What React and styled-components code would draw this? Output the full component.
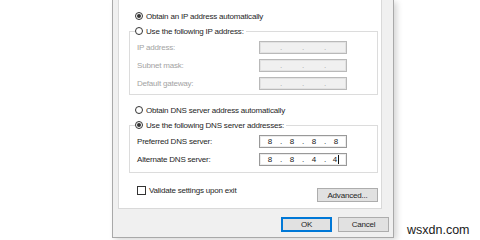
import React from "react";
import styled, { createGlobalStyle } from "styled-components";

const GlobalStyle = createGlobalStyle`
  html, body { margin: 0; padding: 0; background: #ffffff; }
  body {
    width: 480px; height: 240px; overflow: hidden;
    font-family: "Liberation Sans", Arial, sans-serif;
  }
  * { box-sizing: border-box; }
`;

const Page = styled.div`
  display: flex;
  align-items: flex-end;
  width: 480px;
  height: 240px;
  padding-left: 112px;
`;

const Dialog = styled.div`
  align-self: flex-start;
  width: 282px;
  height: 238px;
  display: flex;
  flex-direction: column;
  background: #f0f0f0;
  border: 1px solid #a9a9a9;
  border-top: none;
  box-shadow: 3px 2px 6px rgba(0, 0, 0, 0.16);
  font-size: 8px;
  letter-spacing: -0.2px;
  color: #1e1e1e;
`;

const Panel = styled.div`
  margin: 0 11px 0 5px;
  height: 209px;
  background: #ffffff;
  border: 1px solid #d9d9d9;
  border-top: none;
  padding-top: 10px;
  display: flex;
  flex-direction: column;
`;

const OptionRow = styled.label`
  display: flex;
  align-items: center;
  gap: 3px;
  height: 12px;
  padding-left: ${(p) => p.$indent || 0}px;
  margin-top: ${(p) => p.$top || 0}px;
  white-space: nowrap;
`;

const RadioDot = styled.span`
  width: 8px;
  height: 8px;
  flex: none;
  border: 1px solid #333333;
  border-radius: 50%;
  background: #ffffff;
  display: flex;
  align-items: center;
  justify-content: center;
  &::after {
    content: "";
    width: 4px;
    height: 4px;
    border-radius: 50%;
    background: ${(p) => (p.$on ? "#333333" : "transparent")};
  }
`;

const Group = styled.fieldset`
  margin: ${(p) => p.$top}px 3px 0 10px;
  padding: 4px 0 ${(p) => p.$bottom}px 0;
  border: 1px solid #dcdcdc;
  min-width: 0;
`;

const Legend = styled.legend`
  margin-left: 5px;
  padding: 0 2px 0 0;
`;

const FieldRow = styled.div`
  display: flex;
  align-items: center;
  height: 13px;
  padding-left: 7px;
  & + & { margin-top: 5px; }
`;

const FieldLabel = styled.span`
  width: 122px;
  color: ${(p) => (p.$disabled ? "#a3a3a3" : "#1e1e1e")};
`;

const IpBox = styled.div`
  width: 88px;
  height: 13px;
  padding: 0 1px;
  display: grid;
  grid-template-columns: 18px 4px 18px 4px 18px 4px 18px;
  align-items: center;
  border: 1px solid ${(p) => (p.$disabled ? "#b9b9b9" : "#999999")};
  box-shadow: inset 0 0 0 1px ${(p) => (p.$disabled ? "#e2e2e2" : "#ececec")};
  background: ${(p) => (p.$disabled ? "#f0f0f0" : "#ffffff")};
  letter-spacing: 0;
  color: ${(p) => (p.$disabled ? "#a8a8a8" : "#222222")};
  text-align: center;
`;

const Octet = styled.span`
  display: flex;
  justify-content: center;
  align-items: center;
  line-height: 11px;
`;

const Caret = styled.span`
  width: 1px;
  height: 9px;
  margin-left: 1px;
  background: #111111;
`;

const Sep = styled.span`
  line-height: 11px;
`;

const BottomRow = styled.div`
  margin: 13px 3px 0 10px;
  padding-left: 8px;
  display: flex;
  align-items: flex-start;
  justify-content: space-between;
`;

const CheckLabel = styled.label`
  display: flex;
  align-items: center;
  gap: 3px;
  height: 9px;
  white-space: nowrap;
`;

const CheckBox = styled.span`
  width: 9px;
  height: 9px;
  flex: none;
  border: 1px solid #333333;
  background: #ffffff;
`;

const Button = styled.button`
  width: ${(p) => p.$w}px;
  height: ${(p) => p.$h}px;
  margin-top: ${(p) => p.$top || 0}px;
  padding: 0;
  font-family: inherit;
  font-size: 8px;
  letter-spacing: -0.2px;
  color: #1e1e1e;
  background: #e1e1e1;
  border: 1px solid ${(p) => (p.$default ? "#0078d7" : "#adadad")};
  box-shadow: ${(p) => (p.$default ? "inset 0 0 0 1px #0078d7" : "none")};
`;

const Footer = styled.div`
  display: flex;
  justify-content: flex-end;
  gap: 6px;
  padding: 8px 4px 0 0;
`;

const Watermark = styled.div`
  margin: 0 0 3px 13px;
  font-size: 12.5px;
  color: #1a1a1a;
  font-family: "Liberation Sans", Arial, sans-serif;
`;

function Radio({ on, children, indent, top }) {
  return (
    <OptionRow $indent={indent} $top={top}>
      <RadioDot $on={on} />
      {children}
    </OptionRow>
  );
}

function IpField({ label, value, disabled, caret }) {
  const parts = value || ["", "", "", ""];
  return (
    <FieldRow>
      <FieldLabel $disabled={disabled}>{label}</FieldLabel>
      <IpBox $disabled={disabled}>
        {parts.map((p, i) => (
          <React.Fragment key={i}>
            <Octet>
              {p}
              {caret && i === 3 ? <Caret /> : null}
            </Octet>
            {i < 3 ? <Sep>.</Sep> : null}
          </React.Fragment>
        ))}
      </IpBox>
    </FieldRow>
  );
}

export default function App() {
  return (
    <>
      <GlobalStyle />
      <Page>
        <Dialog>
          <Panel>
            <Radio on indent={16}>Obtain an IP address automatically</Radio>
            <Group $top={3} $bottom={4}>
              <Legend>
                <Radio>Use the following IP address:</Radio>
              </Legend>
              <IpField label="IP address:" disabled />
              <IpField label="Subnet mask:" disabled />
              <IpField label="Default gateway:" disabled />
            </Group>
            <Radio indent={16} top={9}>Obtain DNS server address automatically</Radio>
            <Group $top={3} $bottom={6}>
              <Legend>
                <Radio on>Use the following DNS server addresses:</Radio>
              </Legend>
              <IpField label="Preferred DNS server:" value={["8", "8", "8", "8"]} />
              <IpField label="Alternate DNS server:" value={["8", "8", "4", "4"]} caret />
            </Group>
            <BottomRow>
              <CheckLabel>
                <CheckBox />
                Validate settings upon exit
              </CheckLabel>
              <Button $w={61} $h={14} $top={2}>Advanced...</Button>
            </BottomRow>
          </Panel>
          <Footer>
            <Button $w={51} $h={15} $default>OK</Button>
            <Button $w={51} $h={15}>Cancel</Button>
          </Footer>
        </Dialog>
        <Watermark>wsxdn.com</Watermark>
      </Page>
    </>
  );
}
